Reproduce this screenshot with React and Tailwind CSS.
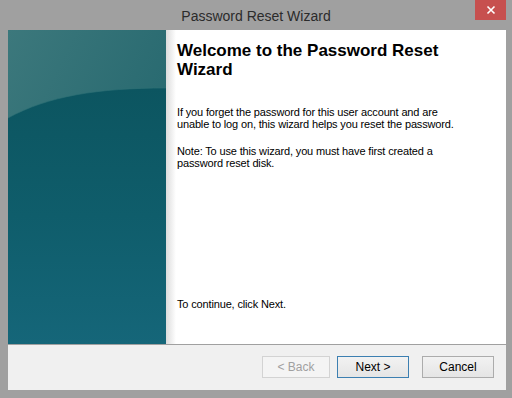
import React from 'react';

const font = { fontFamily: '"Liberation Sans", Arial, sans-serif' };

function SidePanel() {
    return (
        <svg width="158" height="314" viewBox="0 0 158 314" className="block">
            <defs>
                <linearGradient id="top" x1="0" y1="0" x2="1" y2="1">
                    <stop offset="0" stopColor="#3c787c" />
                    <stop offset="1" stopColor="#1c6169" />
                </linearGradient>
                <linearGradient id="bottom" x1="0" y1="0" x2="0" y2="1">
                    <stop offset="0" stopColor="#0c5560" />
                    <stop offset="0.5" stopColor="#0f5d6b" />
                    <stop offset="1" stopColor="#156679" />
                </linearGradient>
            </defs>
            <rect width="158" height="314" fill="url(#top)" />
            <path d="M0 88 C 40 66, 90 58, 158 58 L158 314 L0 314 Z" fill="url(#bottom)" />
            <path d="M0 88 C 40 66, 90 58, 158 58" fill="none" stroke="#2f7177" strokeWidth="1" opacity="0.6" />
        </svg>
    );
}

export default function App() {
    return (
        <div className="w-[512px] h-[398px] bg-[#a0a0a0] flex flex-col" style={font}>
            {/* title bar */}
            <div className="h-[30px] flex items-start relative">
                <div className="flex-1 text-center text-[14px] text-[#2b2b2b] pt-[6px]">Password Reset Wizard</div>
                <div className="absolute right-[6px] top-0 w-[31px] h-[20px] bg-[#c7504f] flex items-center justify-center">
                    <svg width="10" height="10" viewBox="0 0 10 10">
                        <path d="M1.5 1.5 L8.5 8.5 M8.5 1.5 L1.5 8.5" stroke="#fff" strokeWidth="1.6" />
                    </svg>
                </div>
            </div>

            {/* client */}
            <div className="ml-[8px] mr-[6px] h-[360px] flex flex-col bg-[#f0f0f0]">
                <div className="h-[314px] flex bg-white">
                    <SidePanel />
                    <div className="w-[10px] bg-gradient-to-r from-[#dcdcdc] to-white" />
                    <div className="flex-1 flex flex-col pl-[1px] pt-[11px] pb-[34px] pr-[8px] text-black">
                        <div className="text-[17px] font-bold leading-[19px]">
                            Welcome to the Password Reset<br />Wizard
                        </div>
                        <p className="text-[11px] leading-[12px] mt-[27px] tracking-[-0.15px]">
                            If you forget the password for this user account and are<br />unable to log on, this wizard helps you reset the password.
                        </p>
                        <p className="text-[11px] leading-[12px] mt-[15px] tracking-[-0.15px]">
                            Note: To use this wizard, you must have first created a<br />password reset disk.
                        </p>
                        <div className="flex-1" />
                        <p className="text-[11px] leading-[12px] tracking-[-0.15px]">To continue, click Next.</p>
                    </div>
                </div>
                <div className="h-px bg-[#a0a0a0]" />
                <div className="flex-1 flex items-center justify-end pr-[12px] pb-[1px] text-[12px]">
                    <button className="w-[68px] h-[22px] border border-[#d3d3d3] bg-[#f4f4f4] text-[#a0a0a0]">&lt; Back</button>
                    <button className="w-[72px] h-[22px] ml-[7px] border border-[#3c7fb1] bg-gradient-to-b from-[#f2f2f2] to-[#e5e5e5] text-black">Next &gt;</button>
                    <button className="w-[72px] h-[22px] ml-[13px] border border-[#acacac] bg-gradient-to-b from-[#f2f2f2] to-[#e5e5e5] text-black">Cancel</button>
                </div>
            </div>
        </div>
    );
}
